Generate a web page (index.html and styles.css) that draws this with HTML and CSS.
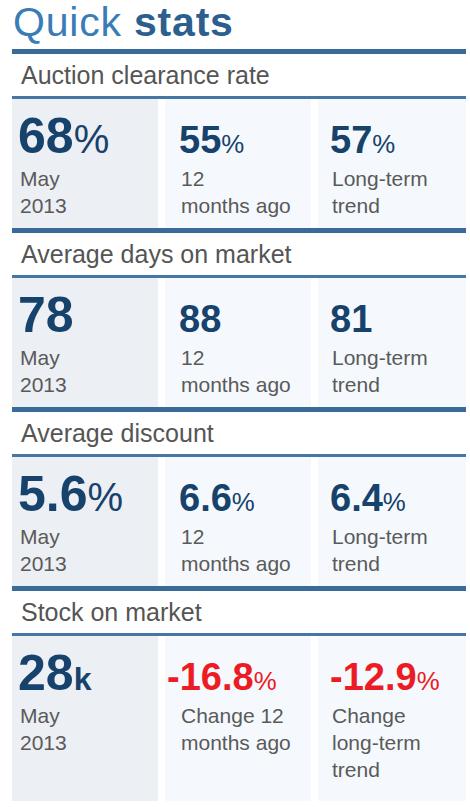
FILE: index.html
```html
<!DOCTYPE html>
<html lang="en">
<head>
    <meta charset="UTF-8">
    <meta name="viewport" content="width=device-width, initial-scale=1.0">
    <title>Quick stats</title>
    <link rel="stylesheet" href="styles.css">
</head>
<body>
    <div class="stats-panel">
        <h1 class="panel-title">Quick <strong>stats</strong></h1>

        <div class="stat-section">
            <div class="stat-heading">Auction clearance rate</div>
            <div class="stat-grid">
                <div class="stat-cell current">
                    <div class="stat-value">68<span class="unit">%</span></div>
                    <div class="stat-label">May<br>2013</div>
                </div>
                <div class="stat-cell past">
                    <div class="stat-value small">55<span class="unit">%</span></div>
                    <div class="stat-label">12<br>months ago</div>
                </div>
                <div class="stat-cell trend">
                    <div class="stat-value small">57<span class="unit">%</span></div>
                    <div class="stat-label">Long-term<br>trend</div>
                </div>
            </div>
        </div>

        <div class="stat-section">
            <div class="stat-heading">Average days on market</div>
            <div class="stat-grid">
                <div class="stat-cell current">
                    <div class="stat-value">78</div>
                    <div class="stat-label">May<br>2013</div>
                </div>
                <div class="stat-cell past">
                    <div class="stat-value small">88</div>
                    <div class="stat-label">12<br>months ago</div>
                </div>
                <div class="stat-cell trend">
                    <div class="stat-value small">81</div>
                    <div class="stat-label">Long-term<br>trend</div>
                </div>
            </div>
        </div>

        <div class="stat-section">
            <div class="stat-heading">Average discount</div>
            <div class="stat-grid">
                <div class="stat-cell current">
                    <div class="stat-value">5.6<span class="unit">%</span></div>
                    <div class="stat-label">May<br>2013</div>
                </div>
                <div class="stat-cell past">
                    <div class="stat-value small">6.6<span class="unit">%</span></div>
                    <div class="stat-label">12<br>months ago</div>
                </div>
                <div class="stat-cell trend">
                    <div class="stat-value small">6.4<span class="unit">%</span></div>
                    <div class="stat-label">Long-term<br>trend</div>
                </div>
            </div>
        </div>

        <div class="stat-section last">
            <div class="stat-heading">Stock on market</div>
            <div class="stat-grid">
                <div class="stat-cell current">
                    <div class="stat-value">28<span class="unit bold">k</span></div>
                    <div class="stat-label">May<br>2013</div>
                </div>
                <div class="stat-cell past">
                    <div class="stat-value small negative">-16.8<span class="unit">%</span></div>
                    <div class="stat-label">Change 12<br>months ago</div>
                </div>
                <div class="stat-cell trend">
                    <div class="stat-value small negative">-12.9<span class="unit">%</span></div>
                    <div class="stat-label">Change<br>long-term<br>trend</div>
                </div>
            </div>
        </div>
    </div>
</body>
</html>
```

FILE: styles.css
```css
body {
    margin: 0;
    background: #ffffff;
    font-family: "Liberation Sans", Arial, sans-serif;
}

.stats-panel {
    width: 454px;
    margin-left: 12px;
}

.panel-title {
    margin: 0 0 5px 1px;
    font-size: 41px;
    line-height: 44px;
    font-weight: normal;
    color: #3a7cb5;
    letter-spacing: 0.8px;
}

.panel-title strong {
    font-weight: bold;
    color: #2d5f8e;
}

.stat-section {
    border-top: 5px solid #3a6a97;
}

.stat-heading {
    height: 42px;
    line-height: 42px;
    padding-left: 9px;
    font-size: 25px;
    color: #555555;
    border-bottom: 3px solid #4676a3;
}

.stat-grid {
    display: grid;
    grid-template-columns: 146px 146px 1fr;
    column-gap: 7px;
}

.stat-cell {
    padding: 12px 8px 9px 8px;
    background: #f5f9fd;
}

.stat-cell.current {
    background: #eceff4;
}

.stat-cell.past {
    padding-left: 16px;
}

.stat-cell.trend {
    padding-left: 14px;
}

.stat-section.last .stat-cell {
    padding-bottom: 18px;
}

.stat-value {
    height: 50px;
    margin-left: -2px;
    font-size: 50px;
    line-height: 50px;
    font-weight: bold;
    color: #17426c;
    white-space: nowrap;
}

.stat-value.small {
    height: 42px;
    font-size: 38px;
    line-height: 42px;
    padding-top: 8px;
}

.stat-value.negative {
    color: #ec1c24;
}

.stat-cell.past .stat-value.negative {
    margin-left: -14px;
}

.unit {
    font-size: 0.8em;
    font-weight: normal;
    line-height: 0;
}

.stat-value.small .unit {
    font-size: 0.68em;
}

.unit.bold {
    font-weight: bold;
    font-size: 0.64em;
}

.stat-label {
    margin-top: 4px;
    font-size: 21px;
    line-height: 27px;
    color: #5a5a5a;
}
```
